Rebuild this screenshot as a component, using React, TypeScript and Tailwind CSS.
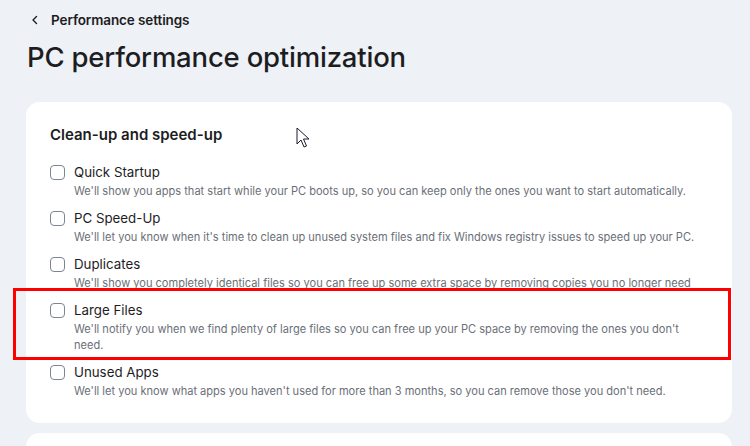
import React from "react";

const items = [
  {
    title: "Quick Startup",
    desc: "We'll show you apps that start while your PC boots up, so you can keep only the ones you want to start automatically.",
  },
  {
    title: "PC Speed-Up",
    desc: "We'll let you know when it's time to clean up unused system files and fix Windows registry issues to speed up your PC.",
  },
  {
    title: "Duplicates",
    desc: "We'll show you completely identical files so you can free up some extra space by removing copies you no longer need",
  },
  {
    title: "Large Files",
    desc: "We'll notify you when we find plenty of large files so you can free up your PC space by removing the ones you don't need.",
  },
  {
    title: "Unused Apps",
    desc: "We'll let you know what apps you haven't used for more than 3 months, so you can remove those you don't need.",
  },
];

export default function App() {
  return (
    <div
      className="relative w-[750px] h-[446px] overflow-hidden bg-[#eef1f6] text-[#1d1d1f]"
      style={{ fontFamily: "Inter, 'Noto Sans', sans-serif" }}
    >
      <div className="pl-[26px] pr-[18px] pt-[11px]">
        <div className="flex items-center gap-[11px] pl-[4px] h-[18px]">
          <svg width="10" height="10" viewBox="0 0 10 10" fill="none">
            <path d="M6.5 1.5 L3 5 L6.5 8.5" stroke="#1d1d1f" strokeWidth="1.4" strokeLinecap="round" strokeLinejoin="round" />
          </svg>
          <span className="text-[13.5px] font-semibold tracking-[-0.1px]">Performance settings</span>
        </div>
        <h1 className="mt-[11px] pl-[1px] text-[27.5px] leading-[34px] font-medium tracking-[-0.2px]">
          PC performance optimization
        </h1>
        <div className="mt-[28px] w-[706px] rounded-[14px] bg-white pl-[24px] pr-[20px] pt-[23px] pb-[24px]">
          <h2 className="text-[15px] leading-[20px] font-semibold">Clean-up and speed-up</h2>
          <div className="mt-[17px] flex flex-col gap-[9px]">
            {items.map((it) => (
              <div key={it.title} className="flex gap-[9px]">
                <div className="mt-[3px] h-[15px] w-[15px] shrink-0 rounded-[4px] border-[1.5px] border-[#7c8595] bg-white" />
                <div className="flex flex-col">
                  <div className="text-[13.3px] leading-[20px] text-[#1d1d1f]">{it.title}</div>
                  <div className="mt-[1px] max-w-[626px] text-[11.05px] leading-[16px] text-[#6b6f78]">{it.desc}</div>
                </div>
              </div>
            ))}
          </div>
        </div>
        <div className="mt-[10px] w-[706px] h-[40px] rounded-[14px] bg-white" />
      </div>

      <div className="pointer-events-none absolute left-[13px] top-[288px] w-[718px] h-[72px] border-[3px] border-[#ff0000]" />

      <svg className="absolute left-[296px] top-[127px]" width="14" height="22" viewBox="0 0 14 22">
        <path d="M1 1 L1 17 L5 13 L8 20 L10.5 19 L7.5 12 L13 12 Z" fill="white" stroke="#1a1a2e" strokeWidth="1" strokeLinejoin="round" />
      </svg>
    </div>
  );
}
